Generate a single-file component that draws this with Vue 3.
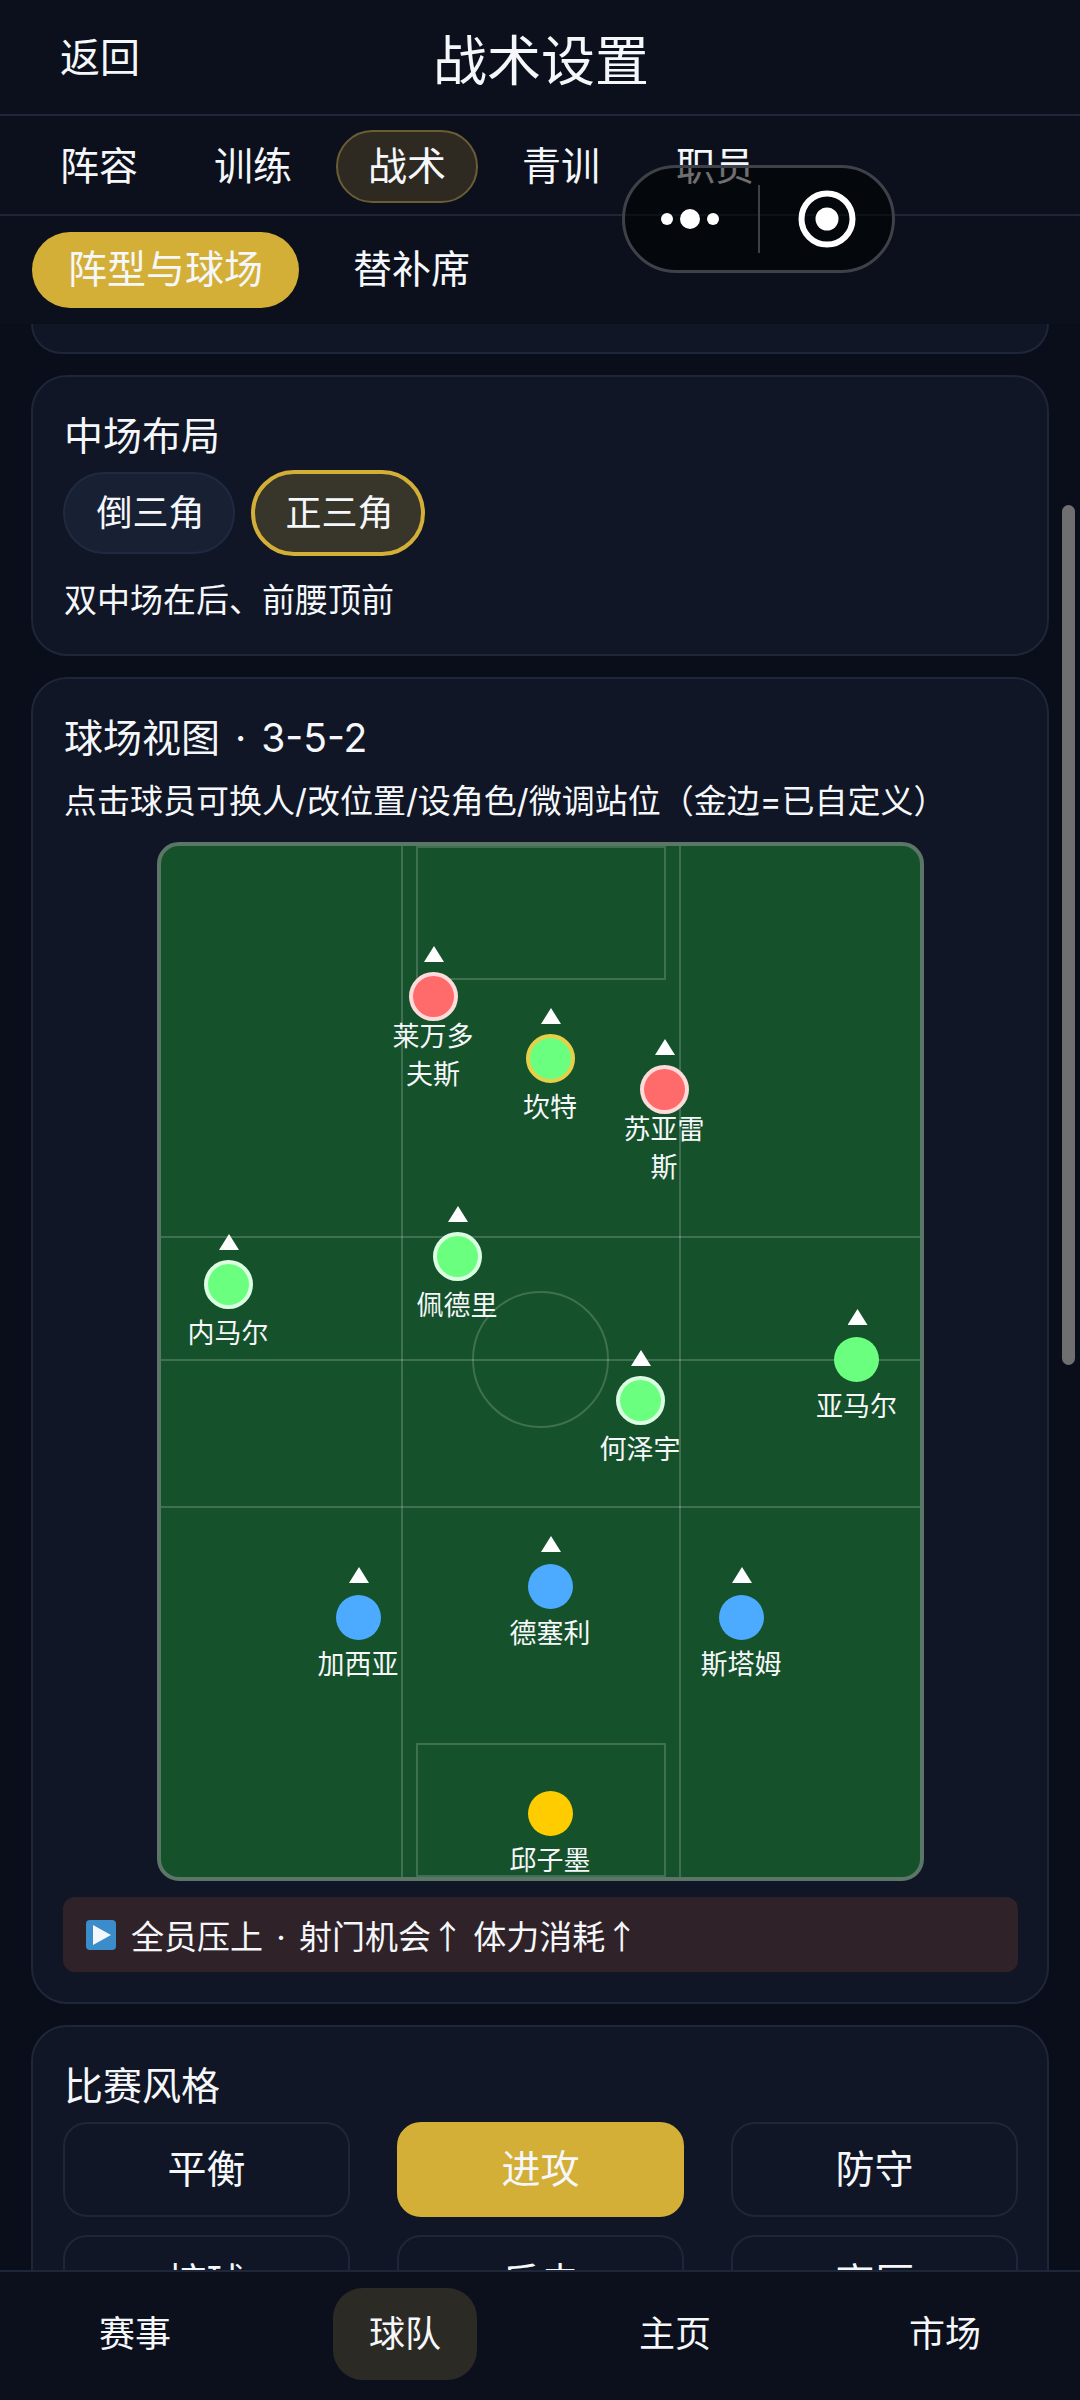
<script setup>
const tabs = ['阵容', '训练', '战术', '青训', '职员']
const styles = ['平衡', '进攻', '防守', '控球', '反击', '高压']
const navs = ['赛事', '球队', '主页', '市场']
const players = [
  { name: '莱万多夫斯', x: 273.5, y: 101, color: '#ff6b6b', ring: 'white', two: true },
  { name: '坎特', x: 390.5, y: 163, color: '#6bff80', ring: 'gold' },
  { name: '苏亚雷斯', x: 504.5, y: 194, color: '#ff6b6b', ring: 'white', two: true },
  { name: '佩德里', x: 297.5, y: 361, color: '#6bff80', ring: 'white' },
  { name: '内马尔', x: 68.5, y: 389, color: '#6bff80', ring: 'white' },
  { name: '亚马尔', x: 697, y: 464, color: '#6bff80' },
  { name: '何泽宇', x: 480.5, y: 505, color: '#6bff80', ring: 'white' },
  { name: '德塞利', x: 390.5, y: 691, color: '#4dabff' },
  { name: '加西亚', x: 198.5, y: 722, color: '#4dabff' },
  { name: '斯塔姆', x: 581.5, y: 722, color: '#4dabff' },
  { name: '邱子墨', x: 390.5, y: 918, color: '#ffcc00', noArrow: true },
]
</script>

<template>
  <div class="phone">
    <header class="top">
      <span class="back">返回</span>
      <span class="title">战术设置</span>
    </header>
    <nav class="tabs">
      <span v-for="t in tabs" :key="t" class="tab" :class="{ on: t === '战术' }">{{ t }}</span>
    </nav>
    <div class="subtabs">
      <span class="sub on">阵型与球场</span>
      <span class="sub">替补席</span>
    </div>

    <main class="scroll">
      <div class="card stub"></div>

      <section class="card mid">
        <h2 class="h">中场布局</h2>
        <div class="pills">
          <span class="pill">倒三角</span>
          <span class="pill on">正三角</span>
        </div>
        <p class="desc">双中场在后、前腰顶前</p>
      </section>

      <section class="card field">
        <h2 class="h">球场视图<span class="wide"> · </span>3-5-2</h2>
        <p class="hint">点击球员可换人/改位置/设角色/微调站位（金边=已自定义）</p>
        <div class="pitch">
          <i class="lv a"></i><i class="lv b"></i>
          <i class="lh c"></i><i class="lh d"></i><i class="lh e"></i>
          <i class="box up"></i><i class="box down"></i>
          <i class="circle"></i>
          <div
            v-for="p in players"
            :key="p.name"
            class="player"
            :style="{ left: p.x + 'px', top: p.y + 'px' }"
          >
            <span v-if="!p.noArrow" class="arrow" :class="{ near: p.ring }"></span>
            <span v-else class="arrow none"></span>
            <span class="dot" :class="p.ring" :style="{ background: p.color }"></span>
            <span class="pname" :class="{ two: p.two }">{{ p.name }}</span>
          </div>
        </div>
        <div class="note">
          <svg class="play" viewBox="0 0 30 30" width="30" height="30">
            <rect width="30" height="30" rx="4" fill="#3b8ccb" />
            <path d="M7 5 L25 15 L7 25 Z" fill="#f2f8fd" />
          </svg>
          <span>全员压上<span class="wide"> · </span>射门机会<span class="arr">↑</span> 体力消耗<span class="arr">↑</span></span>
        </div>
      </section>

      <section class="card styles">
        <h2 class="h">比赛风格</h2>
        <div class="grid">
          <span v-for="s in styles" :key="s" class="opt" :class="{ on: s === '进攻' }">{{ s }}</span>
        </div>
      </section>

      <span class="thumb"></span>
    </main>

    <footer class="bottom">
      <span v-for="n in navs" :key="n" class="nav"><em :class="{ on: n === '球队' }">{{ n }}</em></span>
    </footer>

    <div class="capsule">
      <svg class="more" viewBox="0 0 58 20" width="58" height="20">
        <circle cx="6" cy="10" r="6" fill="#fff" />
        <circle cx="29" cy="10" r="10" fill="#fff" />
        <circle cx="52" cy="10" r="6" fill="#fff" />
      </svg>
      <i class="sep"></i>
      <svg class="rec" viewBox="0 0 58 58" width="58" height="58">
        <circle cx="29" cy="29" r="25.5" fill="none" stroke="#fff" stroke-width="6" />
        <circle cx="29" cy="29" r="11.5" fill="#fff" />
      </svg>
    </div>
  </div>
</template>

<style scoped>
.phone {
  position: relative;
  width: 1080px;
  height: 2400px;
  overflow: hidden;
  display: flex;
  flex-direction: column;
  background: #0a0e1a;
  color: #f5f7fa;
  font-family: Inter, "Noto Sans CJK SC", "Noto Sans", sans-serif;
}
.top {
  position: relative;
  flex: none;
  height: 114px;
  border-bottom: 2px solid #1e2638;
  background: #0b101c;
  display: flex;
  align-items: center;
  justify-content: center;
}
.back {
  position: absolute;
  left: 60px;
  font-size: 40px;
  line-height: 46px;
  top: 35px;
}
.title {
  font-size: 54px;
  position: relative;
  left: 1px;
}
.tabs {
  flex: none;
  height: 98px;
  box-sizing: content-box;
  border-bottom: 2px solid #1e2638;
  background: #0b101c;
  display: flex;
  align-items: center;
  gap: 12px;
  padding-left: 28px;
}
.tab {
  flex: none;
  width: 142px;
  height: 73px;
  box-sizing: border-box;
  border: 2px solid transparent;
  border-radius: 37px;
  font-size: 39px;
  line-height: 67px;
  text-align: center;
  position: relative;
  top: 1px;
}
.tab.on {
  background: #2e2a22;
  border-color: #6a5d34;
}
.subtabs {
  flex: none;
  height: 108px;
  background: #0b101c;
  display: flex;
  align-items: flex-start;
  gap: 18px;
  padding: 16px 0 0 32px;
  box-sizing: border-box;
}
.sub {
  height: 76px;
  padding: 0 36px;
  border-radius: 38px;
  font-size: 39px;
  line-height: 74px;
}
.sub.on {
  background: #d4af37;
}
.scroll {
  position: relative;
  flex: 1;
  min-height: 0;
  overflow: hidden;
  padding: 0 31px;
  display: flex;
  flex-direction: column;
  gap: 21px;
  background: #0a0e1a;
}
.card {
  flex: none;
  box-sizing: border-box;
  background: #101625;
  border: 2px solid #1e2639;
  border-radius: 36px;
  padding: 0 31px;
}
.stub {
  height: 30px;
  border-top: none;
  border-radius: 0 0 36px 36px;
}
.h {
  margin: 0;
  font-size: 39px;
  font-weight: 400;
  line-height: 54px;
}
.wide {
  word-spacing: 4px;
}
.mid {
  height: 281px;
  padding-top: 32px;
}
.pills {
  display: flex;
  align-items: center;
  gap: 16px;
  margin-top: 7px;
  margin-left: -1px;
}
.pill {
  width: 172px;
  height: 82px;
  box-sizing: border-box;
  border: 2px solid #1f2a40;
  border-radius: 41px;
  background: #182034;
  padding-left: 3px;
  font-size: 36px;
  line-height: 79px;
  text-align: center;
}
.pill.on {
  width: 174px;
  height: 86px;
  border: 4px solid #d4af37;
  border-radius: 43px;
  background: #38352a;
}
.desc {
  margin: 21px 0 0;
  font-size: 33px;
  line-height: 46px;
}
.field {
  height: 1327px;
  padding-top: 32px;
}
.hint {
  margin: 13px 0 0;
  font-size: 33px;
  line-height: 46px;
  white-space: nowrap;
}
.pitch {
  position: relative;
  width: 767px;
  height: 1039px;
  box-sizing: border-box;
  margin: 18px auto 0;
  border: 4px solid #5b7566;
  border-radius: 22px;
  background: #15512b;
  overflow: hidden;
}
.lv,
.lh,
.box,
.circle {
  position: absolute;
  display: block;
  box-sizing: border-box;
}
.lv {
  top: 0;
  bottom: 0;
  width: 2px;
  background: rgba(255, 255, 255, 0.18);
}
.lv.a { left: 240px; }
.lv.b { left: 518px; }
.lh {
  left: 0;
  right: 0;
  height: 2px;
  background: rgba(255, 255, 255, 0.18);
}
.lh.c { top: 390px; }
.lh.d { top: 513px; }
.lh.e { top: 660px; }
.box {
  left: 255px;
  width: 250px;
  height: 134px;
  border: 2px solid rgba(255, 255, 255, 0.18);
}
.box.up { top: 0; }
.box.down { bottom: 0; }
.circle {
  left: 311px;
  top: 445px;
  width: 137px;
  height: 137px;
  border: 2px solid rgba(255, 255, 255, 0.18);
  border-radius: 50%;
}
.player {
  position: absolute;
  width: 100px;
  margin-left: -51px;
  margin-top: -1px;
  display: flex;
  flex-direction: column;
  align-items: center;
}
.arrow {
  width: 20px;
  height: 16px;
  margin-left: 2px;
  margin-bottom: 12px;
  background: #fff;
  clip-path: polygon(50% 0, 100% 100%, 0 100%);
}
.arrow.near {
  margin-bottom: 10px;
}
.arrow.none {
  background: none;
}
.dot {
  width: 45px;
  height: 45px;
  box-sizing: border-box;
  border-radius: 50%;
  flex: none;
}
.dot.white,
.dot.gold {
  width: 49px;
  height: 49px;
  border: 4px solid rgba(255, 255, 255, 0.76);
}
.dot.gold {
  border-color: #e6d048;
}
.pname {
  width: 90px;
  margin-top: 6px;
  font-size: 27px;
  line-height: 38px;
  text-align: center;
  word-break: break-all;
}
.pname.two {
  margin-top: -3px;
}
.note {
  display: flex;
  align-items: center;
  gap: 15px;
  height: 75px;
  box-sizing: border-box;
  margin: 16px -2px 0 -1px;
  padding-left: 23px;
  border-radius: 12px;
  background: #2f2329;
  font-size: 33px;
}
.arr {
  font-family: "Noto Sans CJK SC", sans-serif;
}
.play {
  flex: none;
}
.styles {
  height: 400px;
  padding-top: 32px;
}
.grid {
  display: grid;
  grid-template-columns: repeat(3, 287px);
  justify-content: space-between;
  row-gap: 18px;
  margin: 9px -2px 0 -1px;
}
.opt {
  height: 95px;
  box-sizing: border-box;
  border: 2px solid #1e2639;
  border-radius: 24px;
  font-size: 39px;
  line-height: 89px;
  text-align: center;
}
.opt.on {
  background: #d4af37;
  border-color: #d4af37;
}
.thumb {
  position: absolute;
  right: 5px;
  top: 181px;
  width: 13px;
  height: 860px;
  border-radius: 7px;
  background: #6f6f6f;
}
.bottom {
  flex: none;
  height: 130px;
  box-sizing: border-box;
  border-top: 2px solid #1e2639;
  background: #0b101c;
  display: grid;
  grid-template-columns: repeat(4, 1fr);
  align-items: start;
  padding-top: 16px;
}
.nav {
  display: flex;
  justify-content: center;
}
.nav em {
  width: 144px;
  height: 92px;
  border-radius: 30px;
  font-style: normal;
  font-size: 36px;
  line-height: 92px;
  text-align: center;
}
.nav em.on {
  background: #2c2a24;
}
.capsule {
  position: absolute;
  left: 622px;
  top: 165px;
  width: 273px;
  height: 108px;
  box-sizing: border-box;
  border: 3px solid #3f4149;
  border-radius: 54px;
  background: rgba(0, 0, 0, 0.55);
}
.more {
  position: absolute;
  left: 36px;
  top: 41px;
}
.sep {
  position: absolute;
  left: 133px;
  top: 17px;
  width: 2px;
  height: 68px;
  background: #3f4149;
}
.rec {
  position: absolute;
  left: 173px;
  top: 22px;
}
</style>
